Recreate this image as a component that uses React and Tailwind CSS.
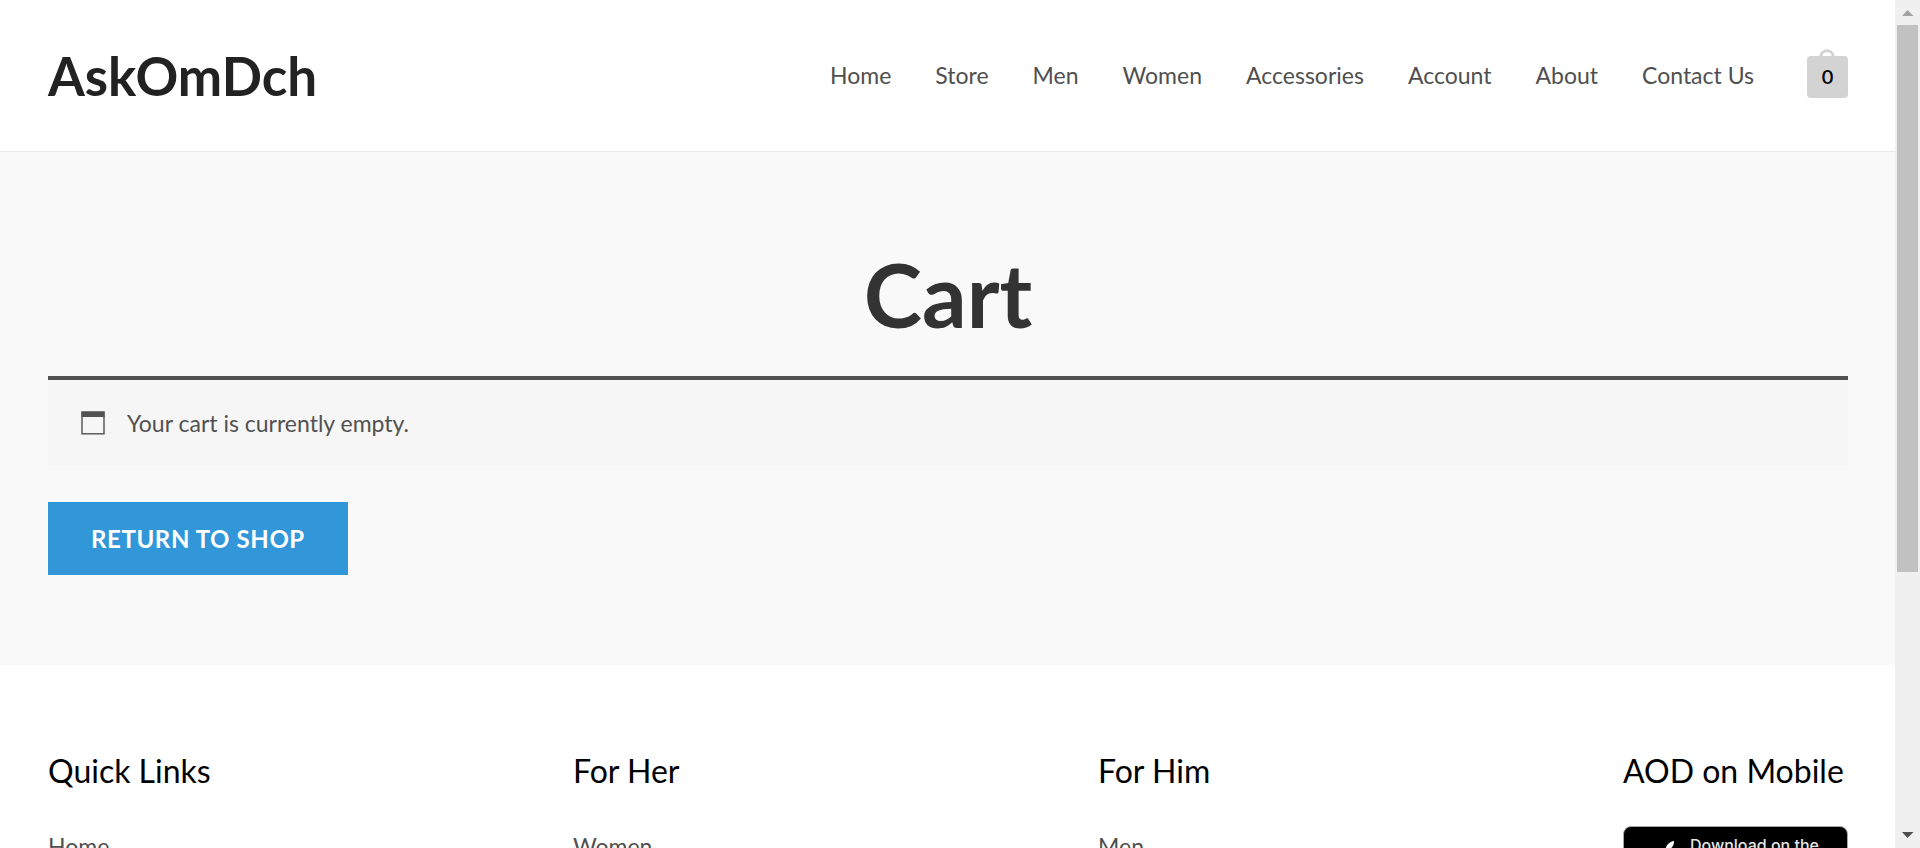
const NAV = ['Home', 'Store', 'Men', 'Women', 'Accessories', 'Account', 'About', 'Contact Us'];

const COLUMNS = [
  { title: 'Quick Links', link: 'Home' },
  { title: 'For Her', link: 'Women' },
  { title: 'For Him', link: 'Men' },
];

function Header() {
  return (
    <header className="flex h-[152px] items-center justify-between border-b border-[#e8e8e8] bg-white pr-[47px] pl-12">
      <a href="#home" className="text-[53px] leading-none font-bold text-[#222222]">AskOmDch</a>
      <div className="flex items-center gap-[53px]">
        <nav aria-label="Main" className="flex gap-11 pb-0.5 text-[23px] leading-8 text-[#4f4f4f]">
          {NAV.map((item) => (
            <a key={item} href={'#' + item.toLowerCase().replace(' ', '-')}>{item}</a>
          ))}
        </nav>
        <a
          href="#cart"
          aria-label="Cart, 0 items"
          className="relative mt-[3px] flex h-[42px] w-[41px] items-center justify-center rounded bg-[#d3d3d3] pb-0.5 text-xl font-semibold text-black"
        >
          <svg className="absolute -top-[7px] left-3 h-2 w-4" viewBox="0 0 16 8" fill="none" stroke="#d3d3d3" strokeWidth="3" aria-hidden="true">
            <path d="M1.8 8 C1.8 -0.2 14.2 -0.2 14.2 8" />
          </svg>
          0
        </a>
      </div>
    </header>
  );
}

function CartSection() {
  return (
    <main className="bg-[#f9f9f9] pt-[86px] pr-[47px] pb-[90px] pl-12">
      <h1 className="mb-[26px] text-center text-[88px] leading-[112px] font-bold text-[#333333]">Cart</h1>
      <div className="mb-9 flex h-[90px] items-center gap-[22px] border-t-4 border-[#515151] bg-[#f6f6f6] pl-[33px] text-[23px] text-[#515151]">
        <svg className="h-6 w-6" viewBox="0 0 24 24" aria-hidden="true">
          <rect x="1" y="1.2" width="22" height="21.6" fill="none" stroke="#515151" strokeWidth="1.4" />
          <rect x="0.5" y="0.5" width="23" height="5.5" fill="#515151" />
        </svg>
        <p>Your cart is currently empty.</p>
      </div>
      <a href="#store" className="inline-flex h-[73px] items-center bg-[#3197d9] px-[43px] align-top text-2xl font-bold tracking-wide text-white uppercase">
        Return to shop
      </a>
    </main>
  );
}

function AppStoreBadge() {
  return (
    <a href="#app-store" aria-label="Download on the App Store" className="flex h-[75px] items-start rounded-lg border border-[#a6a6a6] bg-black text-white">
      <svg className="mt-[13px] ml-6 h-11 w-9 shrink-0" viewBox="0 0 36 44" fill="#ffffff" aria-hidden="true">
        <path d="M26 1c.5 5-4.500 10-8.500 9.800C17 6 21.500 1.500 26 1zM33 34c-2.500 5.500-5 8.500-8 8.500-2.800 0-3.800-1.700-7-1.700s-4.300 1.700-7 1.700C6.500 42.500 1 33 1 25 1 17 6 12.500 11 12.500c3 0 5 2 7.500 2s5-2.300 8.500-2.300c2.500 0 5.500 1.300 7 3.800-7.500 4.500-6.500 14.500-1 18z" />
      </svg>
      <span className="mt-2 ml-1.5 font-[Inter] text-base leading-5 font-medium whitespace-nowrap text-[#e6e6e6]">Download on the</span>
    </a>
  );
}

function Footer() {
  return (
    <footer className="grid grid-cols-4 gap-[300px] bg-white pt-[86px] pr-[47px] pl-12">
      {COLUMNS.map((column) => (
        <section key={column.title}>
          <h2 className="mb-[33px] text-[32px] leading-10 whitespace-nowrap text-black">{column.title}</h2>
          <a href={'#' + column.link.toLowerCase()} className="text-[23px] leading-[44px] text-[#4f4f4f]">{column.link}</a>
        </section>
      ))}
      <section>
        <h2 className="mb-[35px] text-[32px] leading-10 whitespace-nowrap text-black">AOD on Mobile</h2>
        <AppStoreBadge />
      </section>
    </footer>
  );
}

function ScrollBar() {
  return (
    <div aria-hidden="true" className="flex w-[25px] shrink-0 flex-col items-center bg-[#f0f0f0]">
      <svg className="h-[25px] w-[25px] shrink-0" viewBox="0 0 25 25"><path d="M7 16 L12.500 10 L18.500 16 Z" fill="#a3a3a3" /></svg>
      <div className="min-h-0 w-[21px] flex-1">
        <div className="h-[68.6%] bg-[#c1c1c1]" />
      </div>
      <svg className="h-[25px] w-[25px] shrink-0" viewBox="0 0 25 25"><path d="M7 9 L12.500 15 L18.500 9 Z" fill="#505050" /></svg>
    </div>
  );
}

export default function App() {
  return (
    <div className="flex h-screen overflow-hidden bg-white font-[Lato,sans-serif]">
      <div className="min-w-0 flex-1 overflow-hidden">
        <Header />
        <CartSection />
        <Footer />
      </div>
      <ScrollBar />
    </div>
  );
}
